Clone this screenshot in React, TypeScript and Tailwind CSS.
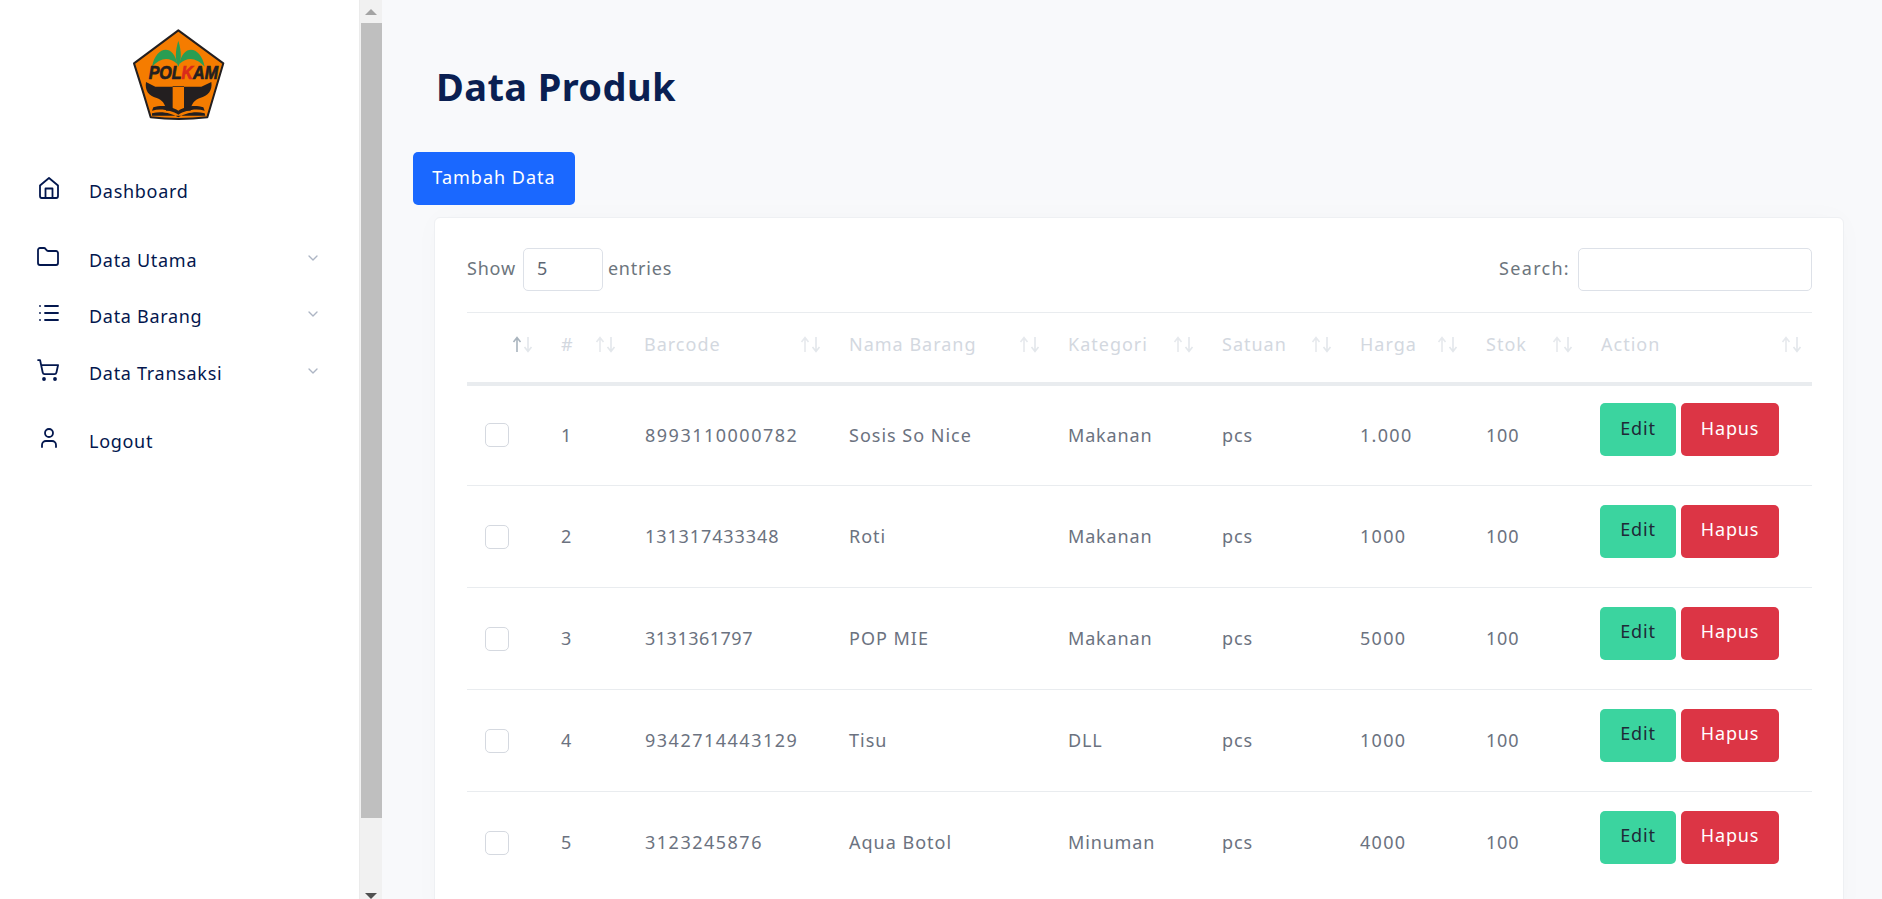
import { ChevronDown, Folder, List, ShoppingCart, User } from 'lucide-react'

const rows = [
  { no: 1, barcode: '8993110000782', track: 'tracking-[1.5px]', nama: 'Sosis So Nice', kategori: 'Makanan', harga: '1.000' },
  { no: 2, barcode: '131317433348', track: 'tracking-[0.9px]', nama: 'Roti', kategori: 'Makanan', harga: '1000' },
  { no: 3, barcode: '3131361797', track: 'tracking-[0.5px]', nama: 'POP MIE', kategori: 'Makanan', harga: '5000' },
  { no: 4, barcode: '9342714443129', track: 'tracking-[1.5px]', nama: 'Tisu', kategori: 'DLL', harga: '1000' },
  { no: 5, barcode: '3123245876', track: 'tracking-[1.5px]', nama: 'Aqua Botol', kategori: 'Minuman', harga: '4000' },
]

const heads = [
  { label: '', w: 'w-[76px]' },
  { label: '#', w: 'w-[83px]' },
  { label: 'Barcode', w: 'w-[205px]' },
  { label: 'Nama Barang', w: 'w-[219px]' },
  { label: 'Kategori', w: 'w-[154px]' },
  { label: 'Satuan', w: 'w-[138px]' },
  { label: 'Harga', w: 'w-[126px]' },
  { label: 'Stok', w: 'w-[115px]' },
  { label: 'Action', w: 'w-[229px]' },
]

function Logo() {
  return (
    <svg width="120" height="110" viewBox="0 0 360 330">
      <path d="M175 31 L310 130 Q286 210 262 292 Q175 302 92 292 Q68 210 42 130 Z" fill="#f57c00" stroke="#231f20" strokeWidth="6" strokeLinejoin="round" />
      <path d="M96 140 C108 78 160 70 172 132 C146 108 120 114 96 140 Z" fill="#2a9d52" />
      <path d="M254 140 C242 78 190 70 178 132 C204 108 230 114 254 140 Z" fill="#2a9d52" />
      <path d="M175 62 C165 95 165 118 175 140 C185 118 185 95 175 62 Z" fill="#2a9d52" />
      <g transform="translate(86 178) scale(0.96 1.1)">
        <text fontSize="50" fontWeight="700" fontStyle="italic" fontFamily="'Liberation Sans', sans-serif" fill="#231f20" stroke="#231f20" strokeWidth="2">
          POL<tspan fill="#d92a1c" stroke="#d92a1c">K</tspan>AM
        </text>
      </g>
      <path d="M78 186 L106 200 L244 200 L274 186 C278 212 264 228 240 234 C224 240 214 250 212 272 L192 272 L192 198 L158 198 L158 272 L138 272 C136 250 126 240 110 234 C86 228 74 212 78 186 Z" fill="#231f20" />
      <path d="M100 262 C130 252 160 262 175 272 C190 262 220 252 250 262 L254 272 C225 264 195 272 175 284 C155 272 125 264 96 272 Z" fill="#231f20" />
      <path d="M96 280 C125 272 155 280 175 292 C195 280 225 272 254 280 L256 287 L96 287 Z" fill="#231f20" />
    </svg>
  )
}

function HomeIcon() {
  return (
    <svg width="22" height="24" viewBox="0 0 22 24" fill="none" stroke="currentColor" strokeWidth="1.8" strokeLinejoin="round" className="ml-[1px]">
      <path d="M2 9.5 L11 2 L20 9.5 V20 C20 21 19.4 22 18.2 22 H3.8 C2.6 22 2 21 2 20 Z" />
      <path d="M7.5 22 V12.5 H14.5 V22" />
    </svg>
  )
}

function SortArrows({ active }: { active?: boolean }) {
  return (
    <svg width="21" height="17" viewBox="0 0 21 17" fill="none" strokeWidth="1.6" className="shrink-0">
      <path d="M5 16 V2 M1.5 6 L5 1.5 L8.5 6" stroke={active ? '#a9b4be' : '#e6e9ed'} />
      <path d="M16 1 V15 M12.5 11 L16 15.5 L19.5 11" stroke="#e3e7eb" />
    </svg>
  )
}

function NavItem({ icon, label, chevron, className }: { icon: React.ReactNode; label: string; chevron?: boolean; className: string }) {
  return (
    <div className={`flex items-center pl-[37px] pr-[38px] h-[40px] text-[18px] text-[#03174e] ${className}`}>
      <span className="w-[52px] -mt-[6px] shrink-0">{icon}</span>
      <span className="flex-1 tracking-[0.7px]">{label}</span>
      {chevron && <ChevronDown size={16} className="text-[#adb5c4] -mt-[4px]" />}
    </div>
  )
}

export default function App() {
  return (
    <div className="flex h-[899px] overflow-hidden bg-[#f8f9fb] font-['Noto_Sans',sans-serif]">
      {/* Sidebar */}
      <aside className="w-[359px] shrink-0 bg-white">
        <div className="flex justify-center pt-[20px]">
          <Logo />
        </div>
        <nav className="mt-[41px]">
          <NavItem className="" icon={<HomeIcon />} label="Dashboard" />
          <NavItem className="mt-[29px]" icon={<Folder size={24} strokeWidth={1.8} className="-ml-[1px]" />} label="Data Utama" chevron />
          <NavItem className="mt-[16px]" icon={<List size={24} strokeWidth={1.8} />} label="Data Barang" chevron />
          <NavItem className="mt-[17px]" icon={<ShoppingCart size={24} strokeWidth={1.8} className="-ml-[1px]" />} label="Data Transaksi" chevron />
          <NavItem className="mt-[28px]" icon={<User size={24} strokeWidth={1.8} />} label="Logout" />
        </nav>
      </aside>

      {/* Sidebar scrollbar */}
      <div className="w-[23px] shrink-0 bg-[#f1f1f1] flex flex-col items-center border-l border-[#ebebeb]">
        <div className="h-[23px] flex items-center justify-center shrink-0">
          <div className="w-0 h-0 border-x-[6px] border-x-transparent border-b-[6px] border-b-[#a3a3a3]" />
        </div>
        <div className="w-[21px] h-[795px] bg-[#bfbfbf] shrink-0" />
        <div className="flex-1 flex items-end pb-0">
          <div className="w-0 h-0 border-x-[6px] border-x-transparent border-t-[6px] border-t-[#505050]" />
        </div>
      </div>

      {/* Main */}
      <main className="flex-1 min-w-0 pl-[31px] pr-[38px]">
        <h1 className="pt-[60px] pl-[23px] text-[38px] leading-[52px] font-bold tracking-[0.4px] text-[#0a1f52]">Data Produk</h1>
        <button className="mt-[40px] block h-[53px] w-[162px] rounded-[5px] bg-[#1a68ff] text-[18px] tracking-[1px] text-white pb-[3px]">Tambah Data</button>
        <section className="mt-[12px] ml-[21px] bg-white border border-[#eef0f3] rounded-[6px] pl-[32px] pr-[31px] pt-[30px] h-[700px] shadow-[0_0_30px_rgba(20,30,60,0.02)]">
          <div className="flex items-center justify-between text-[18px] tracking-[0.8px] text-[#6c757d] h-[43px]">
            <div className="flex items-center gap-[5px]">
              <span className="-mt-[2px] mr-[2px]">Show</span>
              <div className="w-[80px] h-[43px] border border-[#dde1e8] rounded-[5px] flex items-center pl-[13px] pb-[2px] text-[#5d6673]">5</div>
              <span className="-mt-[2px]">entries</span>
            </div>
            <div className="flex items-center gap-[8px]">
              <span className="-mt-[3px] tracking-[1.3px]">Search:</span>
              <div className="w-[234px] h-[43px] border border-[#dde1e8] rounded-[5px]" />
            </div>
          </div>

          <table className="mt-[21px] w-[1345px] table-fixed border-t border-[#e9ecef] text-[18px]">
            <colgroup>
              {heads.map((h, i) => (
                <col key={i} className={h.w} />
              ))}
            </colgroup>
            <thead>
              <tr className="h-[71px] border-b-[4px] border-[#e9ecef]">
                {heads.map((h, i) => (
                  <th key={i} className="pl-[18px] pr-[10px] pb-[5px] font-normal text-left text-[#d3d8df]">
                    <div className="flex items-center justify-between">
                      <span className="tracking-[1px]">{h.label}</span>
                      <SortArrows active={i === 0} />
                    </div>
                  </th>
                ))}
              </tr>
            </thead>
            <tbody className="text-[#6b7280]">
              {rows.map((r) => (
                <tr key={r.no} className="h-[102px] border-b border-[#e9ecef] last:border-b-0">
                  <td className="pl-[18px]">
                    <div className="w-[24px] h-[24px] border border-[#d5d9e0] rounded-[5px]" />
                  </td>
                  <td className="pl-[18px]">{r.no}</td>
                  <td className={`pl-[19px] ${r.track}`}>{r.barcode}</td>
                  <td className="pl-[18px] tracking-[1px]">{r.nama}</td>
                  <td className="pl-[18px] tracking-[0.85px]">{r.kategori}</td>
                  <td className="pl-[18px] tracking-[0.85px]">pcs</td>
                  <td className="pl-[18px] tracking-[1.3px]">{r.harga}</td>
                  <td className="pl-[18px] tracking-[0.8px]">100</td>
                  <td className="pl-[17px]">
                    <div className="flex gap-[5px] -mt-[11px]">
                      <button className="w-[76px] h-[53px] rounded-[5px] bg-[#3bd49f] text-[#1f2937] tracking-[0.8px] pb-[3px]">Edit</button>
                      <button className="w-[98px] h-[53px] rounded-[5px] bg-[#dc3545] text-white tracking-[0.8px] pb-[3px]">Hapus</button>
                    </div>
                  </td>
                </tr>
              ))}
            </tbody>
          </table>
        </section>
      </main>
    </div>
  )
}
